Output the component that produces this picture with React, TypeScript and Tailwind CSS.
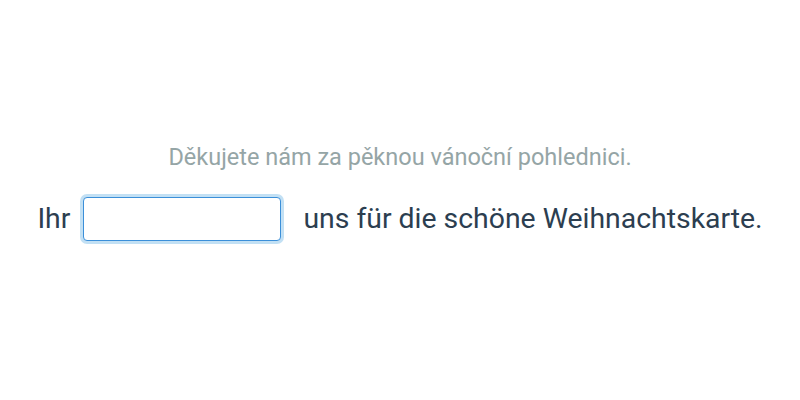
export default function App() {
  return (
    <div className="w-[800px] h-[400px] bg-white flex flex-col items-center font-['Roboto',sans-serif]">
      <p className="mt-[143px] text-[23.5px] leading-[28px] text-[#95a5a6]">
        Děkujete nám za pěknou vánoční pohlednici.
      </p>
      <div className="mt-[26px] flex items-center text-[28.4px] leading-[44px] text-[#2c3e50]">
        <span>Ihr</span>
        <input
          type="text"
          className="ml-[13px] w-[198px] h-[44px] rounded-[4px] border border-[#3b8fd9] bg-white outline-none shadow-[0_0_0_3px_rgba(52,152,219,0.3)]"
        />
        <span className="ml-[22px]">uns für die schöne Weihnachtskarte.</span>
      </div>
    </div>
  );
}
